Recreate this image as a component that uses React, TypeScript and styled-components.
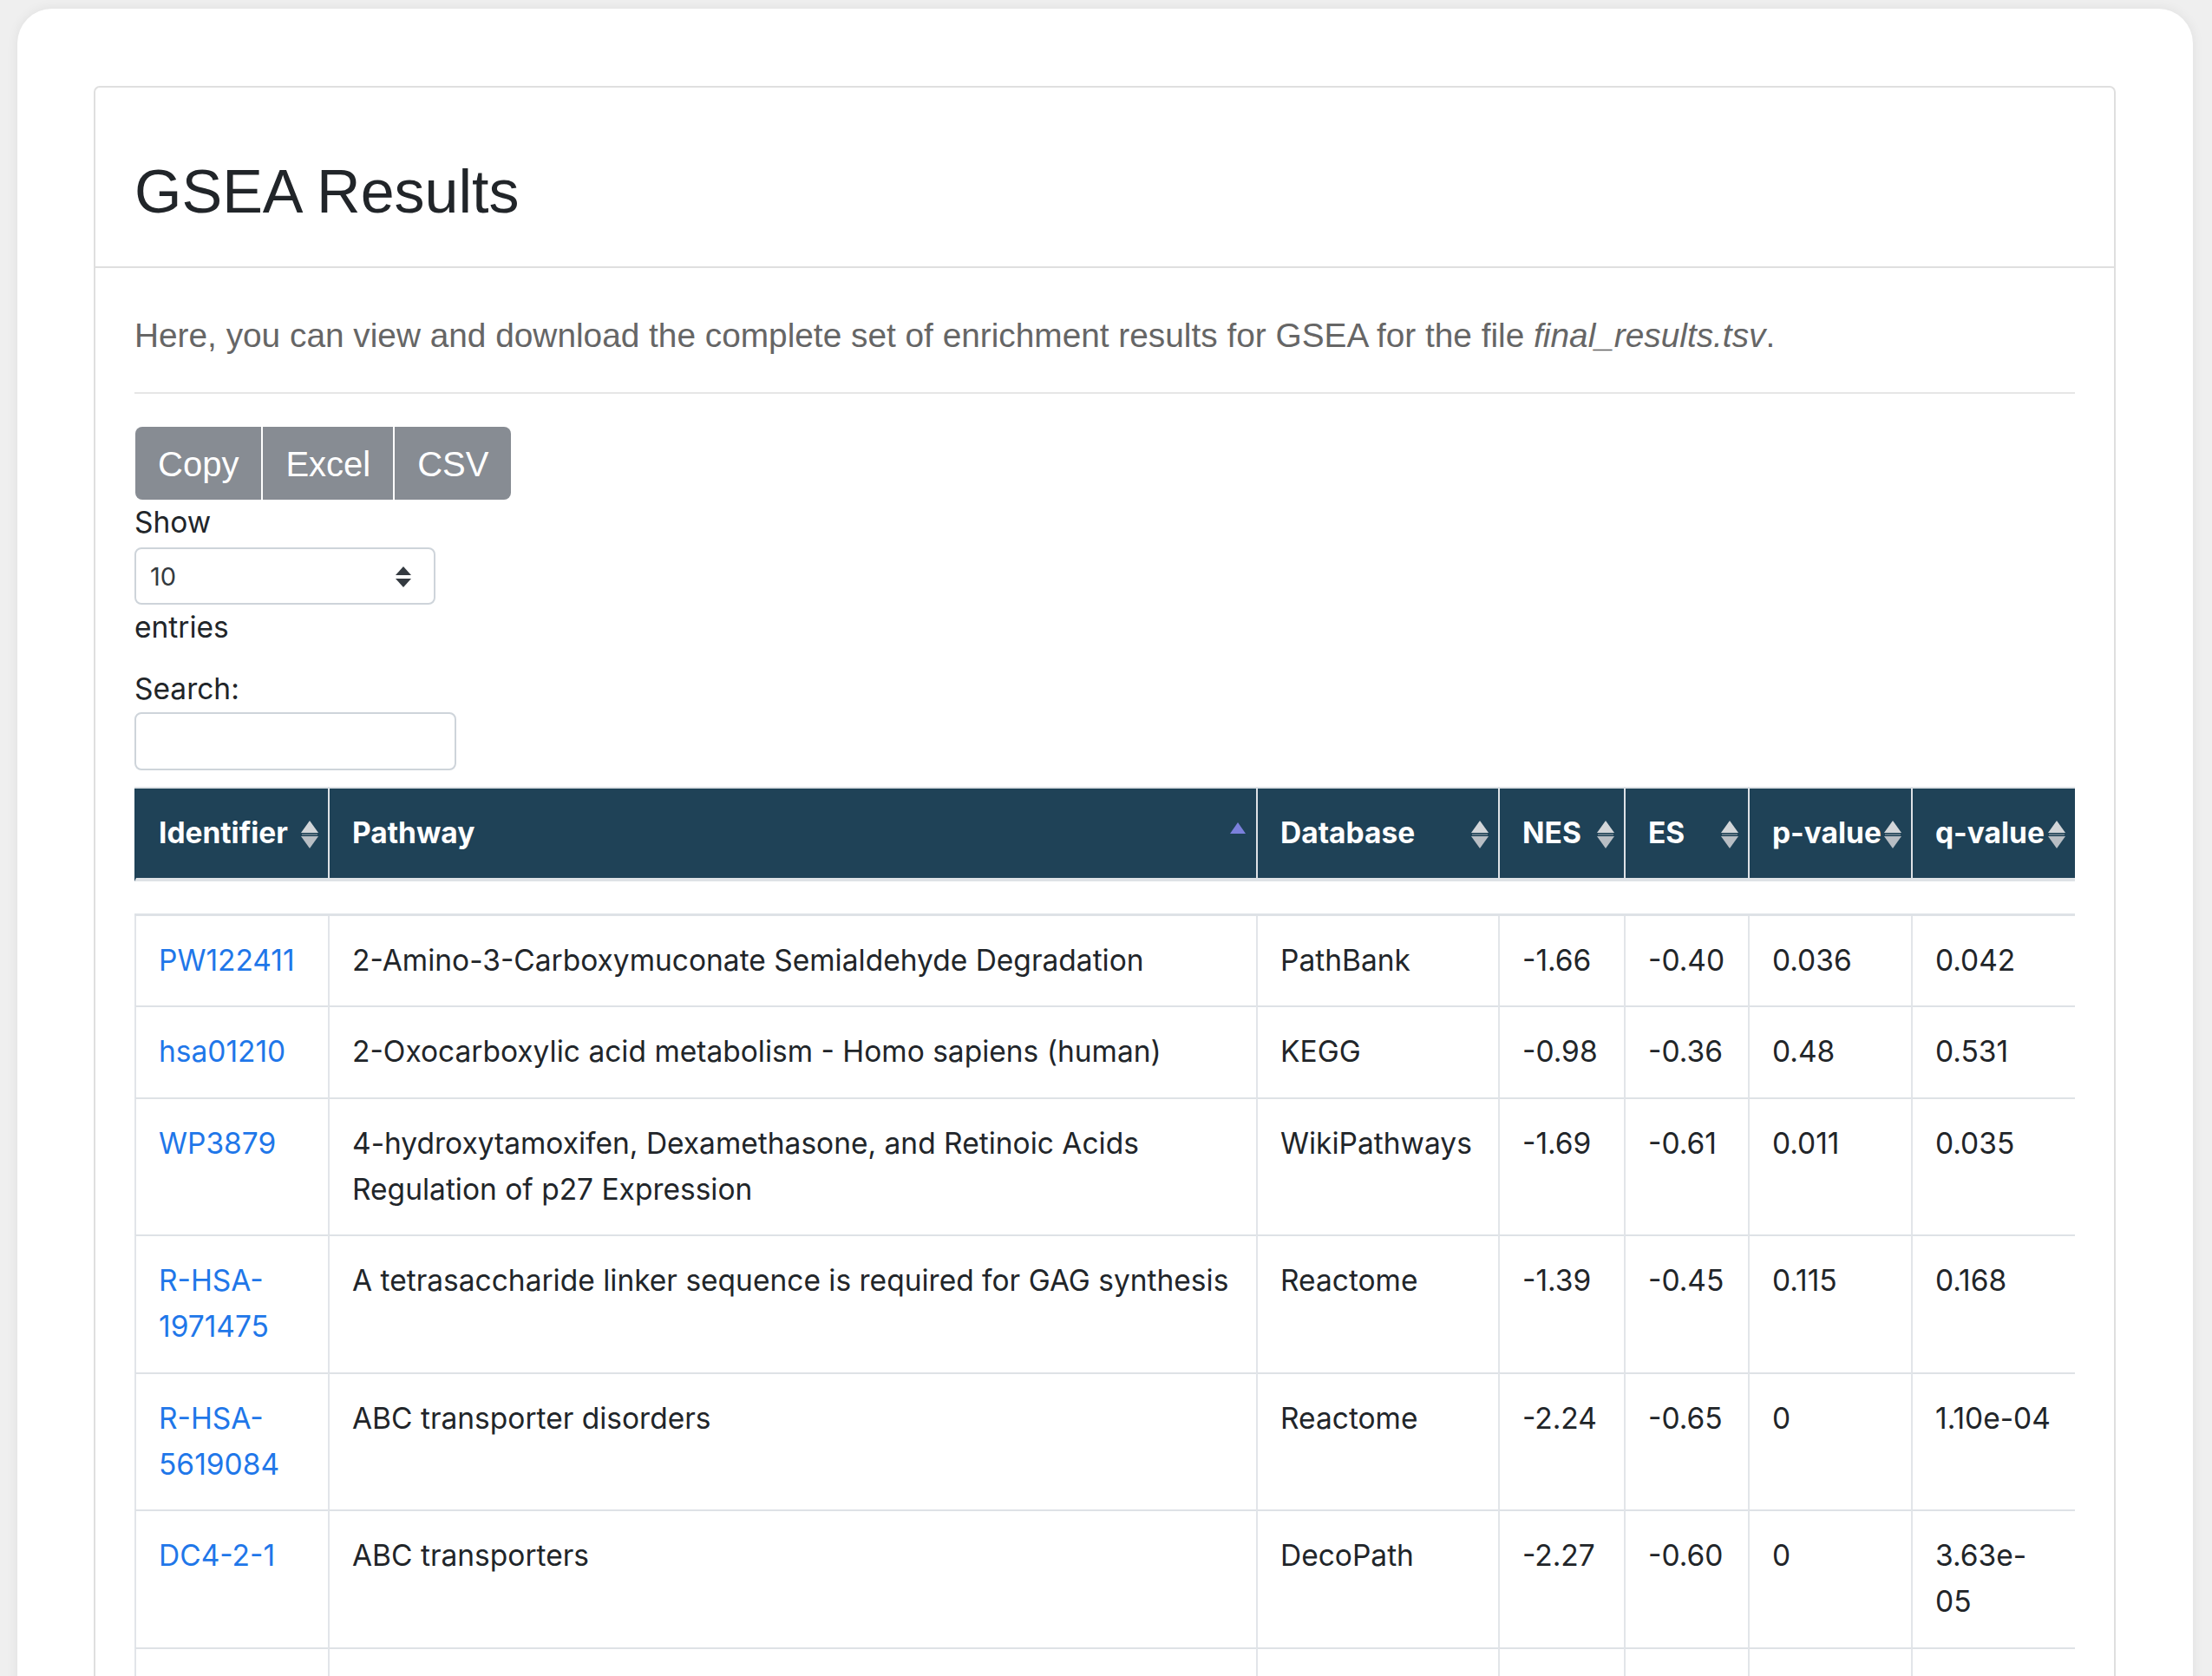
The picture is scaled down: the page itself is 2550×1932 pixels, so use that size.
import React from "react";
import styled, { createGlobalStyle } from "styled-components";

const GlobalStyle = createGlobalStyle`
  *, *::before, *::after { box-sizing: border-box; }
  html, body { margin: 0; padding: 0; background: #efefef; }
  body { font-family: Inter, "Noto Sans", sans-serif; color: #212529; }
`;

const Page = styled.div`
  padding: 10px 22px 0 20px;
`;

const Card = styled.div`
  background: #ffffff;
  border-radius: 40px;
  box-shadow: 0 0 14px rgba(0, 0, 0, 0.07);
  padding: 89px 89px 240px 88px;
`;

const Panel = styled.section`
  border: 2px solid #dfdfdf;
  border-radius: 7px;
`;

const PanelHeader = styled.header`
  padding: 78px 45px 44px;
  border-bottom: 2px solid #dfdfdf;
`;

const Title = styled.h1`
  margin: 0;
  font-family: "Liberation Sans", Arial, sans-serif;
  font-weight: 400;
  font-size: 70px;
  line-height: 84px;
  color: #212529;
`;

const PanelBody = styled.div`
  padding: 49px 45px 60px;
`;

const Lead = styled.p`
  margin: 0;
  font-family: "Liberation Sans", Arial, sans-serif;
  font-size: 38.8px;
  line-height: 57.75px;
  color: #666666;
`;

const Divider = styled.hr`
  margin: 36px 0 38px;
  border: 0;
  border-top: 2px solid #e6e6e6;
`;

const ButtonGroup = styled.div`
  display: inline-flex;
  gap: 2px;
  margin-left: 1px;
`;

const ExportButton = styled.button<{ $first?: boolean; $last?: boolean }>`
  height: 84px;
  padding: 3px 26px 0;
  border: 0;
  background: #878c93;
  color: #ffffff;
  font-family: "Liberation Sans", Arial, sans-serif;
  font-size: 40px;
  line-height: 80px;
  border-radius: ${(p) =>
    p.$first ? "8px 0 0 8px" : p.$last ? "0 8px 8px 0" : "0"};
  cursor: pointer;
`;

const Controls = styled.div`
  display: flex;
  flex-direction: column;
  align-items: flex-start;
`;

const Label = styled.div<{ $gap?: number }>`
  font-size: 33.5px;
  line-height: 53px;
  color: #212529;
  margin-top: ${(p) => p.$gap ?? 0}px;
`;

const SelectBox = styled.div`
  margin-top: 2px;
  width: 347px;
  height: 66px;
  border: 2px solid #ced4da;
  border-radius: 8px;
  padding: 2px 26px 0 16px;
  display: flex;
  align-items: center;
  justify-content: space-between;
  font-size: 29px;
  color: #343a40;
`;

const SearchInput = styled.input`
  width: 371px;
  height: 67px;
  border: 2px solid #ced4da;
  border-radius: 8px;
  background: #fff;
  font-size: 29px;
  padding: 0 16px;
  outline: none;
`;

const TableWrap = styled.div`
  margin-top: 19px;
  width: 2237px;
`;

const Table = styled.table<{ $body?: boolean }>`
  width: 2237px;
  table-layout: fixed;
  border-collapse: separate;
  border-spacing: 0;
  border-top: ${(p) => (p.$body ? "3px solid #dee2e6" : "2px solid #dee2e6")};
  margin-top: ${(p) => (p.$body ? "37px" : "0")};
`;

const HeadCell = styled.th<{ $w: number; $first?: boolean }>`
  position: relative;
  width: ${(p) => p.$w}px;
  background: #1f4257;
  color: #ffffff;
  font-weight: 700;
  font-size: 33.5px;
  line-height: 53px;
  text-align: left;
  white-space: nowrap;
  padding: 25px 28px 25px 26px;
  border-left: 2px solid ${(p) => (p.$first ? "#1f4257" : "#dee2e6")};
  border-bottom: 4px solid #dee2e6;
`;

const SortIcon = styled.svg`
  position: absolute;
  right: 11px;
  top: 37px;
  width: 20px;
  height: 33px;
`;

const AscIcon = styled.svg`
  position: absolute;
  right: 12px;
  top: 39px;
  width: 18px;
  height: 13px;
`;

const Cell = styled.td<{ $w: number; $top?: boolean }>`
  width: ${(p) => p.$w}px;
  vertical-align: top;
  font-size: 33.5px;
  line-height: 53px;
  color: #212529;
  padding: 25px 22px 25.5px 26px;
  border-left: 2px solid #e2e5e9;
  border-top: ${(p) => (p.$top ? "0" : "2px solid #dee2e6")};
`;

const IdLink = styled.a`
  color: #1f77e9;
  text-decoration: none;
`;

const columns = [
  { key: "Identifier", w: 223 },
  { key: "Pathway", w: 1070 },
  { key: "Database", w: 279 },
  { key: "NES", w: 145 },
  { key: "ES", w: 143 },
  { key: "p-value", w: 188 },
  { key: "q-value", w: 189 },
];

const rows = [
  ["PW122411", "2-Amino-3-Carboxymuconate Semialdehyde Degradation", "PathBank", "-1.66", "-0.40", "0.036", "0.042"],
  ["hsa01210", "2-Oxocarboxylic acid metabolism - Homo sapiens (human)", "KEGG", "-0.98", "-0.36", "0.48", "0.531"],
  ["WP3879", "4-hydroxytamoxifen, Dexamethasone, and Retinoic Acids Regulation of p27 Expression", "WikiPathways", "-1.69", "-0.61", "0.011", "0.035"],
  ["R-HSA-1971475", "A tetrasaccharide linker sequence is required for GAG synthesis", "Reactome", "-1.39", "-0.45", "0.115", "0.168"],
  ["R-HSA-5619084", "ABC transporter disorders", "Reactome", "-2.24", "-0.65", "0", "1.10e-04"],
  ["DC4-2-1", "ABC transporters", "DecoPath", "-2.27", "-0.60", "0", "3.63e-05"],
  ["hsa02010", "ABC transporters - Homo sapiens (human)", "KEGG", "-2.05", "-0.58", "0", "2.10e-04"],
  ["WP1780", "ABC-family proteins mediated transport", "WikiPathways", "-1.84", "-0.49", "0.004", "0.012"],
];

const BothArrows = () => (
  <SortIcon viewBox="0 0 20 33">
    <polygon points="10,0 20,14 0,14" fill="#d3d6d9" />
    <rect x="1" y="15" width="18" height="2" fill="#9aa3ab" opacity="0.5" />
    <polygon points="0,18 20,18 10,32" fill="#b8bec4" />
  </SortIcon>
);

const Asc = () => (
  <AscIcon viewBox="0 0 18 13">
    <polygon points="9,0 18,13 0,13" fill="#7b80dc" />
  </AscIcon>
);

const SelectArrows = () => (
  <svg width="18" height="24" viewBox="0 0 18 24">
    <polygon points="9,0 18,10 0,10" fill="#343a40" />
    <polygon points="0,14 18,14 9,24" fill="#343a40" />
  </svg>
);

export default function App() {
  return (
    <>
      <GlobalStyle />
      <Page>
        <Card>
          <Panel>
            <PanelHeader>
              <Title>GSEA Results</Title>
            </PanelHeader>
            <PanelBody>
              <Lead>
                Here, you can view and download the complete set of enrichment results for GSEA for the file{" "}
                <i>final_results.tsv</i>.
              </Lead>
              <Divider />
              <ButtonGroup>
                <ExportButton $first>Copy</ExportButton>
                <ExportButton>Excel</ExportButton>
                <ExportButton $last>CSV</ExportButton>
              </ButtonGroup>
              <Controls>
                <Label>Show</Label>
                <SelectBox>
                  <span>10</span>
                  <SelectArrows />
                </SelectBox>
                <Label>entries</Label>
                <Label $gap={18}>Search:</Label>
                <SearchInput type="search" aria-label="Search" />
              </Controls>
              <TableWrap>
                <Table>
                  <thead>
                    <tr>
                      {columns.map((c, i) => (
                        <HeadCell key={c.key} $w={c.w} $first={i === 0}>
                          {c.key}
                          {c.key === "Pathway" ? <Asc /> : <BothArrows />}
                        </HeadCell>
                      ))}
                    </tr>
                  </thead>
                </Table>
                <Table $body>
                  <tbody>
                    {rows.map((r, ri) => (
                      <tr key={r[0]}>
                        {r.map((v, ci) => (
                          <Cell key={ci} $w={columns[ci].w} $top={ri === 0}>
                            {ci === 0 ? <IdLink href="#">{v}</IdLink> : v}
                          </Cell>
                        ))}
                      </tr>
                    ))}
                  </tbody>
                </Table>
              </TableWrap>
            </PanelBody>
          </Panel>
        </Card>
      </Page>
    </>
  );
}
